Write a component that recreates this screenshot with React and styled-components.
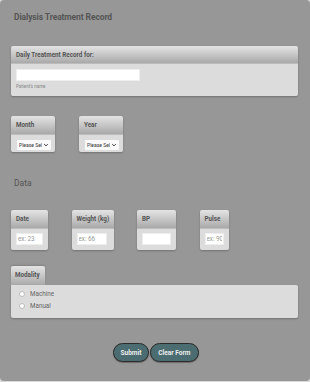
import React from 'react';
import styled, { createGlobalStyle } from 'styled-components';

const GlobalStyle = createGlobalStyle`
    html, body {
        margin: 0;
        padding: 0;
        background: #d8d8d8;
    }
    * {
        box-sizing: border-box;
    }
`;

const FONT = `"Roboto", "Liberation Sans", sans-serif`;

const App = () => {
    return (
        <>
            <GlobalStyle />
            <Page>
                <Title>Dialysis Treatment Record</Title>

                <Panel>
                    <PanelHeader>Daily Treatment Record for:</PanelHeader>
                    <PanelBody>
                        <TextInput type="text" width={124} />
                        <Hint>Patient's name</Hint>
                    </PanelBody>
                </Panel>

                <BoxRow gap={24} top={20}>
                    <Box width={44}>
                        <BoxHeader>Month</BoxHeader>
                        <BoxBody>
                            <SelectWrap>
                                <Select defaultValue="">
                                    <option value="">Please Select</option>
                                </Select>
                                <Chevron viewBox="0 0 10 10">
                                    <path d="M2 3.5 L5 6.5 L8 3.5" />
                                </Chevron>
                            </SelectWrap>
                        </BoxBody>
                    </Box>
                    <Box width={44}>
                        <BoxHeader>Year</BoxHeader>
                        <BoxBody>
                            <SelectWrap>
                                <Select defaultValue="">
                                    <option value="">Please Select</option>
                                </Select>
                                <Chevron viewBox="0 0 10 10">
                                    <path d="M2 3.5 L5 6.5 L8 3.5" />
                                </Chevron>
                            </SelectWrap>
                        </BoxBody>
                    </Box>
                </BoxRow>

                <SectionLabel>Data</SectionLabel>

                <BoxRow gap={23.5} top={21}>
                    <Box width={37}>
                        <BoxHeader>Date</BoxHeader>
                        <BoxBody tall>
                            <TextInput type="text" width={27} placeholder="ex: 23" />
                        </BoxBody>
                    </Box>
                    <Box width={42}>
                        <BoxHeader>Weight (kg)</BoxHeader>
                        <BoxBody tall>
                            <TextInput type="text" width={30} placeholder="ex: 66" />
                        </BoxBody>
                    </Box>
                    <Box width={39}>
                        <BoxHeader>BP</BoxHeader>
                        <BoxBody tall>
                            <TextInput type="text" width={29} />
                        </BoxBody>
                    </Box>
                    <Box width={29}>
                        <BoxHeader>Pulse</BoxHeader>
                        <BoxBody tall>
                            <TextInput type="text" width={19} placeholder="ex: 90" />
                        </BoxBody>
                    </Box>
                </BoxRow>

                <Modality>
                    <Tab>Modality</Tab>
                    <RadioPanel>
                        <RadioLabel>
                            <Radio type="radio" name="modality" />
                            Machine
                        </RadioLabel>
                        <RadioLabel>
                            <Radio type="radio" name="modality" />
                            Manual
                        </RadioLabel>
                    </RadioPanel>
                </Modality>

                <Buttons>
                    <Button>Submit</Button>
                    <Button>Clear Form</Button>
                </Buttons>
            </Page>
        </>
    );
};

const Page = styled.div`
    height: 381px;
    background: #979797;
    border-radius: 4px;
    padding: 11px 12px 0 11px;
    font-family: ${FONT};
    display: flex;
    flex-direction: column;
`;

const Title = styled.div`
    font-size: 8.5px;
    line-height: 12px;
    font-weight: bold;
    color: #555;
    padding-left: 3px;
    letter-spacing: -0.1px;
`;

const headerGradient = `linear-gradient(to bottom, #e4e4e4 0%, #c4c4c4 55%, #a9a9a9 100%)`;

const Panel = styled.div`
    margin-top: 23px;
    border-radius: 2px;
    overflow: hidden;
    box-shadow: 0 1px 2px rgba(0, 0, 0, 0.25);
`;

const PanelHeader = styled.div`
    height: 18px;
    line-height: 18px;
    padding-left: 5px;
    font-size: 6.3px;
    font-weight: bold;
    color: #555;
    background: ${headerGradient};
    border-bottom: 1px solid #bcbcbc;
`;

const PanelBody = styled.div`
    background: #dcdcdc;
    height: 32px;
    padding: 5px 5px 0;
    display: flex;
    flex-direction: column;
    align-items: flex-start;
`;

const TextInput = styled.input`
    display: block;
    width: ${({ width }) => width}px;
    height: 12px;
    border: 1px solid #eeeeee;
    background: #fff;
    padding: 0 1px;
    font-family: ${FONT};
    font-size: 6.3px;
    color: #444;
    outline: none;

    &::placeholder {
        color: #999;
    }
`;

const Hint = styled.div`
    margin-top: 3px;
    font-size: 4.5px;
    color: #888;
`;

const BoxRow = styled.div`
    display: flex;
    gap: ${({ gap }) => gap}px;
    margin-top: ${({ top }) => top}px;
    align-items: flex-start;
`;

const Box = styled.div`
    width: ${({ width }) => width}px;
    border-radius: 2px;
    overflow: hidden;
    box-shadow: 0 1px 2px rgba(0, 0, 0, 0.25);
`;

const BoxHeader = styled.div`
    height: 19px;
    line-height: 18px;
    padding: 0 0 0 5px;
    font-size: 6.3px;
    font-weight: bold;
    color: #555;
    white-space: nowrap;
    background: ${headerGradient};
    border-bottom: 1px solid #bcbcbc;
`;

const BoxBody = styled.div`
    background: #dcdcdc;
    height: ${({ tall }) => (tall ? 21 : 17)}px;
    padding: ${({ tall }) => (tall ? '4px 5px 0' : '5px 4px 0 6px')};
`;

const SelectWrap = styled.div`
    position: relative;
    width: 34px;
    height: 10px;
`;

const Select = styled.select`
    display: block;
    appearance: none;
    -webkit-appearance: none;
    width: 34px;
    height: 10px;
    line-height: 10px;
    border: none;
    border-radius: 1px;
    background: #fafafa;
    padding: 0 9px 0 2px;
    font-family: ${FONT};
    font-size: 5px;
    color: #333;
    outline: none;
`;

const Chevron = styled.svg`
    position: absolute;
    right: 2px;
    top: 2px;
    width: 6px;
    height: 6px;
    fill: none;
    stroke: #333;
    stroke-width: 1.6;
    pointer-events: none;
`;

const SectionLabel = styled.div`
    margin-top: 25px;
    padding-left: 3px;
    font-size: 8.5px;
    line-height: 12px;
    color: #555;
`;

const Modality = styled.div`
    margin-top: 16px;
    display: flex;
    flex-direction: column;
    align-items: flex-start;
`;

const Tab = styled.div`
    width: 34px;
    height: 19px;
    line-height: 19px;
    padding: 0 0 0 4px;
    font-size: 6.3px;
    font-weight: bold;
    color: #555;
    background: ${headerGradient};
    border-radius: 2px 2px 0 0;
    box-shadow: 0 -1px 2px rgba(0, 0, 0, 0.15);
`;

const RadioPanel = styled.div`
    align-self: stretch;
    height: 33px;
    background: #dcdcdc;
    border-radius: 0 2px 2px 2px;
    box-shadow: 0 1px 2px rgba(0, 0, 0, 0.25);
    padding: 4px 6px 0;
    display: flex;
    flex-direction: column;
    gap: 2px;
`;

const RadioLabel = styled.label`
    display: flex;
    align-items: center;
    gap: 5px;
    height: 10px;
    font-size: 6.3px;
    color: #666;
`;

const Radio = styled.input`
    appearance: none;
    -webkit-appearance: none;
    margin: 0 0 0 2px;
    width: 6px;
    height: 6px;
    border-radius: 50%;
    background: #fff;
    border: 1px solid #bbb;
`;

const Buttons = styled.div`
    margin-top: 25px;
    display: flex;
    justify-content: center;
    gap: 1px;
    padding-left: 2px;
`;

const Button = styled.button`
    height: 19px;
    padding: 0 7px;
    border-radius: 10px;
    border: 1px solid #2b2b2b;
    background: #4b6c70;
    color: #eee;
    font-family: ${FONT};
    font-size: 6.5px;
    font-weight: bold;
    box-shadow: 0 1px 1px rgba(0, 0, 0, 0.3);
`;

export default App;
